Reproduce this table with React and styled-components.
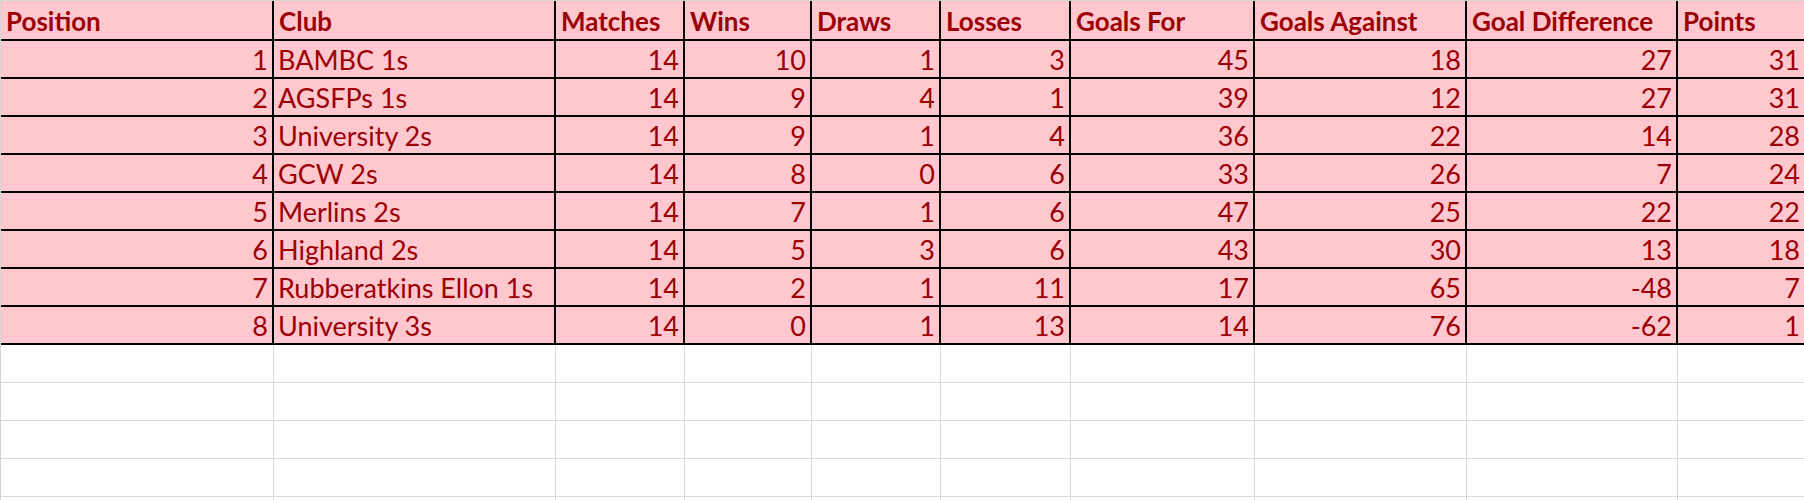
import React from "react";
import styled, { createGlobalStyle } from "styled-components";

const GlobalStyle = createGlobalStyle`
  html, body {
    margin: 0;
    padding: 0;
    overflow: hidden;
    background: #ffffff;
  }
`;

const headers = [
  "Position",
  "Club",
  "Matches",
  "Wins",
  "Draws",
  "Losses",
  "Goals For",
  "Goals Against",
  "Goal Difference",
  "Points",
];

const rows = [
  [1, "BAMBC 1s", 14, 10, 1, 3, 45, 18, 27, 31],
  [2, "AGSFPs 1s", 14, 9, 4, 1, 39, 12, 27, 31],
  [3, "University 2s", 14, 9, 1, 4, 36, 22, 14, 28],
  [4, "GCW 2s", 14, 8, 0, 6, 33, 26, 7, 24],
  [5, "Merlins 2s", 14, 7, 1, 6, 47, 25, 22, 22],
  [6, "Highland 2s", 14, 5, 3, 6, 43, 30, 13, 18],
  [7, "Rubberatkins Ellon 1s", 14, 2, 1, 11, 17, 65, -48, 7],
  [8, "University 3s", 14, 0, 1, 13, 14, 76, -62, 1],
];

const EMPTY_ROWS = 5;

// last column runs just past the window edge, like the sheet scrolled right
const Sheet = styled.div`
  width: 1806px;
  display: grid;
  grid-template-columns: 273px 282px 129px 127px 129px 130px 184px 212px 211px 128px;
  border-top: 1px solid #d4d4d4;
  border-left: 1px solid #d4d4d4;
  font-family: Lato, "Liberation Sans", sans-serif;
  font-size: 27px;
  color: #9c0006;
`;

const HeaderCell = styled.div`
  box-sizing: border-box;
  height: 40px;
  padding: 0 5px 2px;
  display: flex;
  align-items: flex-end;
  background: #ffc7ce;
  border-right: 2px solid #000000;
  border-bottom: 2px solid #000000;
  font-size: 26px;
  font-weight: 700;
  white-space: nowrap;
  overflow: hidden;
`;

const Cell = styled.div`
  box-sizing: border-box;
  height: 38px;
  padding: 0 4px 1px;
  display: flex;
  align-items: flex-end;
  justify-content: ${(p) => (p.$text ? "flex-start" : "flex-end")};
  background: #ffc7ce;
  border-right: 2px solid #000000;
  border-bottom: 2px solid #000000;
  white-space: nowrap;
  overflow: hidden;
`;

const EmptyCell = styled.div`
  box-sizing: border-box;
  height: 38px;
  border-right: 1px solid #dadada;
  border-bottom: 1px solid #dadada;
`;

export default function App() {
  return (
    <>
      <GlobalStyle />
      <Sheet>
        {headers.map((h) => (
          <HeaderCell key={h}>{h}</HeaderCell>
        ))}
        {rows.map((row) =>
          row.map((value, i) => (
            <Cell key={`${row[0]}-${i}`} $text={i === 1}>
              {value}
            </Cell>
          ))
        )}
        {Array.from({ length: EMPTY_ROWS * headers.length }).map((_, i) => (
          <EmptyCell key={`e-${i}`} />
        ))}
      </Sheet>
    </>
  );
}
